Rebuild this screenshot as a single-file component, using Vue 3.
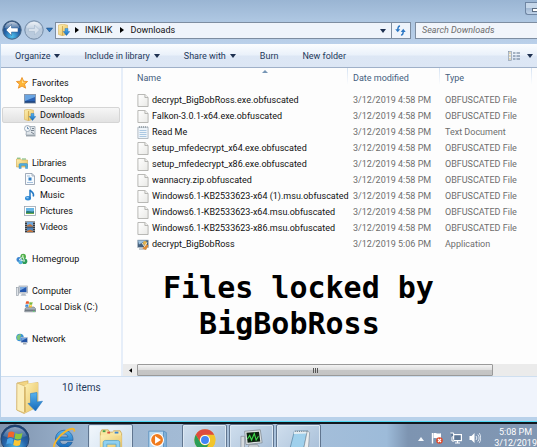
<template>
  <div class="desktop">
    <svg class="sprite" aria-hidden="true">
      <defs>
        <linearGradient id="g-folder" x1="0" y1="0" x2="1" y2="1">
          <stop offset="0" stop-color="#fdf0b4" />
          <stop offset="1" stop-color="#e6bf5c" />
        </linearGradient>
        <linearGradient id="g-blue" x1="0" y1="0" x2="0" y2="1">
          <stop offset="0" stop-color="#56b4f0" />
          <stop offset="1" stop-color="#1668b8" />
        </linearGradient>
        <linearGradient id="g-paper" x1="0" y1="0" x2="1" y2="1">
          <stop offset="0" stop-color="#ffffff" />
          <stop offset="1" stop-color="#e9e9e6" />
        </linearGradient>
        <radialGradient id="g-orb" cx="50%" cy="85%" r="85%">
          <stop offset="0" stop-color="#4fc3ef" />
          <stop offset="0.5" stop-color="#2563a8" />
          <stop offset="1" stop-color="#1c3f70" />
        </radialGradient>
        <linearGradient id="g-gloss" x1="0" y1="0" x2="0" y2="1">
          <stop offset="0" stop-color="#fff" stop-opacity="0.75" />
          <stop offset="1" stop-color="#fff" stop-opacity="0.1" />
        </linearGradient>
      </defs>

      <symbol id="i-star" viewBox="0 0 12 12">
        <path d="M6 .5 7.6 4.2 11.6 4.5 8.6 7.200 9.600 11.200 6 9.100 2.400 11.200 3.400 7.200 .4 4.500 4.400 4.200Z" fill="#ffb637" stroke="#e88a1c" stroke-width=".8" stroke-linejoin="round" />
        <path d="M6 2.200 7 5 9.500 5.300 6 6Z" fill="#ffe39a" />
      </symbol>
      <symbol id="i-desktop" viewBox="0 0 12 12">
        <rect x=".5" y="1.500" width="11" height="8.500" fill="#2a62b4" stroke="#8797ad" />
        <path d="M1 2h10v2L1 8Z" fill="#6aa5e2" />
        <path d="M1 9h10" stroke="#18345f" />
      </symbol>
      <symbol id="i-downloads" viewBox="0 0 12 12">
        <path d="M.5 1 5 .2 9.500 1.200V10L4.500 11.800.5 10.500Z" fill="url(#g-folder)" stroke="#d3a94a" stroke-width=".5" />
        <path d="M4.500 2v9.600" stroke="#c89b3d" stroke-width=".7" />
        <path d="M7 4.500h3v3h1.800L8.500 11.500 5.200 7.500H7Z" fill="url(#g-blue)" stroke="#1b6ab5" stroke-width=".4" />
      </symbol>
      <symbol id="i-recent" viewBox="0 0 12 12">
        <path d="M3 1.500h8V10H2Z" fill="#dfe5ea" stroke="#98a3ae" stroke-width=".8" />
        <path d="M2 10.800h9.500" stroke="#8b969f" stroke-width="1.200" />
        <path d="M7 7 10 9M8 3.500h2M7 5.500h3" stroke="#77828e" />
        <circle cx="3.500" cy="3.500" r="3" fill="#f6f9fc" stroke="#8c9aa9" stroke-width=".8" />
        <path d="M3.500 1.800v1.900H5" fill="none" stroke="#49759f" stroke-width=".8" />
      </symbol>
      <symbol id="i-libraries" viewBox="0 0 12 12">
        <path d="M.5 2h4l1 1h6v7H.5Z" fill="url(#g-folder)" stroke="#d3a94a" stroke-width=".6" />
        <path d="M1 1.200h3.500M6 2h4" stroke="#6fb36a" />
        <path d="M3 11.500V8c0-1 .5-1.500 1.500-1.500h6c.8 0 1.200.5 1.200 1.500v3.500H9.500V8.500H5.200v3Z" fill="#4eabe0" stroke="#2c83bb" stroke-width=".4" />
      </symbol>
      <symbol id="i-documents" viewBox="0 0 12 12">
        <path d="M1.500.5h6.500l2.500 2.500v8.500h-9Z" fill="#f7fafd" stroke="#8b98a8" stroke-width=".8" />
        <path d="M8 .5V3h2.500" fill="none" stroke="#8b98a8" stroke-width=".7" />
        <path d="M4.500 4.500h3v3h-3Z" fill="#2f7fc4" />
        <path d="M3 9.500h6M3 3h3" stroke="#8eb1d4" stroke-width=".8" />
      </symbol>
      <symbol id="i-music" viewBox="0 0 12 12">
        <ellipse cx="4" cy="9.300" rx="3" ry="2.200" fill="#2e8ad6" />
        <path d="M6 9.500V.8c.8 2.200 4.800 2.600 3.300 6.700" fill="none" stroke="#2378c4" stroke-width="1.500" />
        <ellipse cx="3.500" cy="8.800" rx="1.300" ry=".8" fill="#9ad0f5" />
      </symbol>
      <symbol id="i-pictures" viewBox="0 0 12 12">
        <rect x=".5" y="1.500" width="11" height="9" fill="#fff" stroke="#9aa5b1" stroke-width=".8" />
        <rect x="2" y="3" width="8" height="6" fill="#66b5e4" />
        <path d="M2 6.500c3-1.500 5 1 8-.5v3H2Z" fill="#287b78" />
        <path d="M2 8h8v1H2Z" fill="#6aa94b" />
      </symbol>
      <symbol id="i-videos" viewBox="0 0 12 12">
        <rect x="1" y=".5" width="10" height="11" fill="#35393f" />
        <rect x="3" y="1" width="6" height="4.500" fill="#6fa8de" />
        <rect x="3" y="6.500" width="6" height="4.500" fill="#4d83bd" />
        <path d="M3 4.500 6 3l3 2v.5H3ZM3 10l3-1.500L9 10v1H3Z" fill="#c4743a" />
        <path d="M2 1v10.500M10 1v10.500" stroke="#dfe3e6" stroke-width=".9" stroke-dasharray="1 1" />
      </symbol>
      <symbol id="i-homegroup" viewBox="0 0 12 12">
        <circle cx="7.200" cy="3.600" r="2.800" fill="#4fae4a" />
        <circle cx="3" cy="6.500" r="2.500" fill="#3f86d0" />
        <circle cx="8.500" cy="8.300" r="2.800" fill="#2f9c58" />
        <circle cx="4.500" cy="9.300" r="2" fill="#56b1df" />
        <path d="M3 6.500 7 3.800l1.500 4.500Z" fill="none" stroke="#e9f7ee" stroke-width=".9" />
        <circle cx="6.800" cy="3" r=".9" fill="#c6ecb8" />
      </symbol>
      <symbol id="i-computer" viewBox="0 0 12 12">
        <rect x=".5" y="2.500" width="2" height="8" fill="#dfe3e8" stroke="#8e98a3" stroke-width=".6" />
        <rect x="3" y="1" width="8.500" height="7" fill="#d6dbe2" stroke="#8e98a3" stroke-width=".6" />
        <rect x="4" y="2" width="6.500" height="5" fill="#2457ae" />
        <path d="M4 2h6.500L4 5.500Z" fill="#7aa9e0" />
        <path d="M6 8.500h3l1.500 2.200h-6Z" fill="#b4bcc6" />
      </symbol>
      <symbol id="i-disk" viewBox="0 0 12 12">
        <path d="M1 7.500 3 6h7l1.500 1.500v3.300H.7Z" fill="#a8b0b9" stroke="#6d7680" stroke-width=".6" />
        <path d="M1 9.200h10.300" stroke="#59626c" />
        <path d="M9 10.300h1.500" stroke="#5be06b" />
        <path d="M2 .8c1-.6 2-.6 3 0L4.600 3.200c-1-.5-2-.5-3 0Z" fill="#ea5a2a" />
        <path d="M5.600 1c1 .5 2 .5 3 0L8.200 3.400c-1 .5-2 .5-3 0Z" fill="#79b63a" />
        <path d="M1.500 3.800c1-.5 2-.5 3 0L4.100 6c-1-.5-2-.5-3 0Z" fill="#3f8dd8" />
        <path d="M5.100 4c1 .5 2 .5 3 0L7.700 6.200c-1 .5-2 .5-3 0Z" fill="#f5bd2f" />
      </symbol>
      <symbol id="i-network" viewBox="0 0 12 12">
        <circle cx="4" cy="4.500" r="3.800" fill="#3c94d4" />
        <path d="M1 3c2-2 3-2 4-1.500S3.500 4 4 5.500 2.500 7.500 1.200 6.500Z" fill="#7fc777" />
        <rect x="5" y="4.500" width="6.500" height="5" fill="#2454a5" stroke="#c0c9d4" stroke-width=".7" />
        <path d="M5.500 5h5.500l-5.500 3Z" fill="#6da2df" />
        <path d="M7 10.800h3.500" stroke="#8e98a3" stroke-width="1.200" />
      </symbol>

      <symbol id="i-file" viewBox="0 0 12 13">
        <path d="M.9.5h7l3.200 3v9H.9Z" fill="url(#g-paper)" stroke="#a8a8a5" stroke-width=".8" />
        <path d="M7.900.5v3h3.200" fill="#f1f1ee" stroke="#a8a8a5" stroke-width=".8" />
      </symbol>
      <symbol id="i-text" viewBox="0 0 12 13">
        <path d="M.9 1.200h10.200v11.300H.9Z" fill="#eef4f9" stroke="#a5aeb7" stroke-width=".8" />
        <path d="M2 1h8.500" stroke="#8c969f" stroke-width="1.400" stroke-dasharray="1 1" />
        <path d="M2.500 4.500h7M2.500 6.500h7M2.500 8.500h7M2.500 10.500h7" stroke="#a3c3df" stroke-width=".9" />
      </symbol>
      <symbol id="i-app" viewBox="0 0 12 12">
        <path d="M.5 1.500h11V9H.5Z" fill="#44607d" stroke="#b3bec9" stroke-width=".7" />
        <path d="M1 2h8L2 6Z" fill="#9ec1de" />
        <path d="M2 10.500h7" stroke="#8b969f" />
        <circle cx="8" cy="4.500" r="2" fill="#e7b44a" />
        <path d="M8.500 5.500 11.500 7 9 11.500 5.500 10Z" fill="#dd8b36" />
        <path d="M5 4.500 7.500 8 10 4" fill="none" stroke="#f5ecd2" />
      </symbol>
    </svg>

    <section class="window">
      <header class="frame">
        <div class="title-bar">
          <button class="minimize" aria-label="Minimize"><span></span></button>
        </div>
        <div class="nav-row">
          <button class="round back" aria-label="Back">
            <svg viewBox="0 0 20 20">
              <circle cx="10" cy="10" r="9.200" fill="url(#g-orb)" stroke="#45617f" />
              <path d="M2.500 8a7.600 7.600 0 0 1 15 0c-5 2-10 2-15 0Z" fill="url(#g-gloss)" />
              <path d="M9.500 4.500 4 10l5.500 5.500v-3.500H16V8H9.500Z" fill="#fff" stroke="#27568d" stroke-width=".5" />
            </svg>
          </button>
          <button class="round forward" aria-label="Forward">
            <svg viewBox="0 0 20 20">
              <circle cx="10" cy="10" r="9.200" fill="#b9cadd" stroke="#748ba6" />
              <path d="M2.500 8a7.600 7.600 0 0 1 15 0c-5 2-10 2-15 0Z" fill="url(#g-gloss)" />
              <path d="M10.500 5 15.500 10l-5 5v-3.500H4.500v-3h6Z" fill="#d7e1ec" stroke="#a5b8cc" stroke-width=".6" />
            </svg>
          </button>
          <button class="history" aria-label="Recent pages">
            <svg viewBox="0 0 8 6"><path d="M.5.8h7L4 5.200Z" fill="#2b78c0" stroke="#1f4c82" stroke-width=".7" /></svg>
          </button>
          <div class="address">
            <svg class="icon"><use href="#i-downloads" /></svg>
            <svg class="crumb-arrow" viewBox="0 0 4 6"><path d="M0 0 4 3 0 6Z" /></svg>
            <a href="#inklik">INKLIK</a>
            <svg class="crumb-arrow" viewBox="0 0 4 6"><path d="M0 0 4 3 0 6Z" /></svg>
            <a href="#downloads">Downloads</a>
            <button class="drop" aria-label="Previous locations"><span class="caret"></span></button>
            <button class="refresh" aria-label="Refresh">
              <svg viewBox="0 0 12 12">
                <path d="M5.500 1C3 1 3 3 3 6" fill="none" stroke="#2d78c4" stroke-width="1.600" />
                <path d="M.3 4.500h5.400L3 8Z" fill="#2d78c4" />
                <path d="M6.500 11C9 11 9 9 9 6.500" fill="none" stroke="#2d78c4" stroke-width="1.600" />
                <path d="M6.300 7.500h5.400L9 4Z" fill="#2d78c4" />
              </svg>
            </button>
          </div>
          <input class="search" type="text" placeholder="Search Downloads" aria-label="Search Downloads" />
        </div>
      </header>

      <div class="toolbar">
        <button v-for="c in commands" :key="c.label" class="command">
          {{ c.label }}<span v-if="c.menu" class="caret"></span>
        </button>
        <button class="command view" aria-label="Change your view">
          <svg viewBox="0 0 12 10">
            <rect x=".4" y=".4" width="3" height="9.200" fill="#e9eef4" stroke="#7f8fa3" stroke-width=".6" />
            <path d="M1.200 2h1.500M1.200 5h1.500M1.200 8h1.500" stroke="#c9a95b" />
            <path d="M5 2h2.500M8.500 2H12M5 5h2.500M8.500 5H12M5 8h2.500M8.500 8H12" stroke="#5b7189" />
          </svg>
          <span class="caret"></span>
        </button>
      </div>

      <div class="body">
        <nav class="sidebar">
          <ul v-for="group in groups" :key="group[0].label">
            <li v-for="(item, i) in group" :key="item.label">
              <a :href="'#' + item.icon" :class="{ child: i > 0, selected: item.selected }">
                <svg class="icon"><use :href="'#i-' + item.icon" /></svg>{{ item.label }}
              </a>
            </li>
          </ul>
        </nav>

        <main class="content">
          <table class="files">
            <thead>
              <tr>
                <th class="col-name">Name<span class="sort"></span></th>
                <th class="col-meta">Date modified</th>
                <th class="col-meta">Type</th>
                <th class="col-rest"></th>
              </tr>
            </thead>
            <tbody>
              <tr v-for="file in files" :key="file.name">
                <td class="name">
                  <span><svg class="icon"><use :href="'#i-' + file.icon" /></svg>{{ file.name }}</span>
                </td>
                <td>{{ file.date }}</td>
                <td>{{ file.type }}</td>
                <td></td>
              </tr>
            </tbody>
          </table>
          <p class="note">Files locked by<br />&nbsp;&nbsp;BigBobRoss</p>
          <div class="scrollbar">
            <button class="scroll-left" aria-label="Scroll left">
              <svg viewBox="0 0 4 6"><path d="M4 0 0 3 4 6Z" /></svg>
            </button>
            <div class="thumb"><i></i><i></i><i></i></div>
          </div>
        </main>
      </div>

      <footer class="details">
        <svg viewBox="0 0 28 34">
          <path d="M1 3 12 .8V4l10-1.500v24L8 33.500.8 30Z" fill="#f2d583" stroke="#cba452" stroke-width=".6" />
          <path d="M1 3 8.500 6v27L.8 30Z" fill="#fbeebb" stroke="#d0ad60" stroke-width=".6" />
          <path d="M8.500 6 12 3.500 22 2.500v24L8.500 33Z" fill="url(#g-folder)" />
          <path d="M9 7v25" stroke="#b98d3a" stroke-width=".8" />
          <path d="M14.500 13.500 21 12.500v9.500l5.500-.8L19.500 31 12 23.500l2.500-.4Z" fill="url(#g-blue)" stroke="#2a7cc4" stroke-width=".6" />
        </svg>
        <span>10 items</span>
      </footer>
    </section>

    <div class="taskbar">
      <button class="start" aria-label="Start">
        <svg viewBox="0 0 30 30">
          <circle cx="15" cy="15" r="14" fill="url(#g-orb)" stroke="#29466b" />
          <path d="M3 12a12.500 12.500 0 0 1 24 0c-8 3-16 3-24 0Z" fill="url(#g-gloss)" opacity=".7" />
          <path d="M8.500 8.500c2-1.200 4-1.200 6 0l-1 5.500c-2-1.200-4-1.200-6 0Z" fill="#f0652b" />
          <path d="M15.500 9c2 1.200 4.500 1.200 7 0l-1.200 5.500c-2.300 1.200-4.500 1.200-6.800 0Z" fill="#8cc63e" />
          <path d="M7.300 15c2-1.200 4-1.200 6 0l-1 5.500c-2-1.200-4-1.200-6 0Z" fill="#4aa5e8" />
          <path d="M14.300 15.500c2.300 1.200 4.500 1.200 6.800 0L20 21c-2.300 1.200-4.500 1.200-6.800 0Z" fill="#fcc634" />
        </svg>
      </button>
      <button class="task ie" aria-label="Internet Explorer">
        <svg viewBox="0 0 26 26">
          <path d="M13 3.500a9.500 9.500 0 1 0 9 13h-5c-1 1.600-2.300 2.300-4 2.300-2.500 0-4.300-1.700-4.500-4.300h14.300C23 8.200 19 3.500 13 3.500Zm-4.300 7.300C9.200 8.700 10.800 7.500 13 7.500s3.900 1.200 4.300 3.300Z" fill="url(#g-blue)" stroke="#155090" stroke-width=".6" />
          <path d="M2.500 23.500C.5 20 6 10 15.500 4.200 21 .9 25 1 24 5" fill="none" stroke="#f4b62c" stroke-width="2" />
        </svg>
      </button>
      <button class="task open active" aria-label="Windows Explorer">
        <svg viewBox="0 0 26 26">
          <path d="M1.500 5 3 2h7l1.500 2.500h3L16 3h7l1.500 3v19h-23Z" fill="#f9e6a0" stroke="#c9a046" stroke-width=".8" />
          <path d="M4 3.500h3" stroke="#46a04b" stroke-width="2" />
          <path d="M9 5h3" stroke="#d9513c" stroke-width="2" />
          <path d="M17 5h4" stroke="#3f86d0" stroke-width="2" />
          <path d="M1.500 8h23v18h-23Z" fill="url(#g-folder)" />
          <path d="M4.500 26V16c0-1.500.8-2.500 2.500-2.500h13c1.700 0 2.500 1 2.500 2.500v10h-4v-8.500H8.500V26Z" fill="#8fd0f0" stroke="#4f9fca" stroke-width=".8" />
        </svg>
      </button>
      <button class="task wmp" aria-label="Media Player">
        <svg viewBox="0 0 26 26">
          <path d="M3 4.500h16v21H3Z" fill="#b9d9f1" stroke="#5e93c0" />
          <path d="M19 4.500l3 1.500v20h-3Z" fill="#83b4dc" stroke="#5e93c0" />
          <circle cx="12" cy="14" r="7" fill="#f07b1e" stroke="#fff" stroke-width="1.200" />
          <path d="M9.800 9.800v8.400l6.400-4.200Z" fill="#fff" />
        </svg>
      </button>
      <button class="task open" aria-label="Chrome">
        <svg viewBox="0 0 26 26">
          <circle cx="13" cy="13" r="11.500" fill="#f2c52b" />
          <path d="M3 7.300A11.500 11.500 0 0 1 23 7.300H13A5.700 5.700 0 0 0 7.800 15.500Z" fill="#dd4b3e" />
          <path d="M3 7.300A11.500 11.500 0 0 0 13 24.500L18 15.800A5.700 5.700 0 0 1 8 15.800Z" fill="#2a9d58" />
          <circle cx="13" cy="13" r="5.500" fill="#fff" />
          <circle cx="13" cy="13" r="4.300" fill="#4285f4" />
        </svg>
      </button>
      <button class="task open" aria-label="Task Manager">
        <svg viewBox="0 0 26 26">
          <path d="M1 9h4v13H1Z" fill="#d5dade" stroke="#7c858d" stroke-width=".7" />
          <path d="M5 3.500 22 2l2 14-17.500 2Z" fill="#dfe3e5" stroke="#7c858d" stroke-width=".8" />
          <path d="M7 5.200 20.500 4l1.500 10.500L8.300 16Z" fill="#0d2410" />
          <path d="M8 12l2.500-4 2 5 3-7 2 7 2.500-4" fill="none" stroke="#3fdc4a" stroke-width="1.200" />
          <path d="M10 18h9l3 4.500H8Z" fill="#c9ced2" stroke="#7c858d" stroke-width=".7" />
        </svg>
      </button>
      <button class="task open" aria-label="Notepad">
        <svg viewBox="0 0 26 26">
          <path d="M8 3.500 22 3l-4.500 22H2.500Z" fill="#9fd0ec" stroke="#5c87a5" stroke-width=".8" />
          <path d="M8 3.500 22 3l-.7 3-14 .5Z" fill="#e5edf2" />
          <path d="M22 3l2.500 2L23 25h-5.500Z" fill="#ebeef0" stroke="#7e8c97" stroke-width=".7" />
          <path d="M9 3.700h13" stroke="#6d7d8a" stroke-width="1.500" stroke-dasharray="1 1" />
        </svg>
      </button>

      <div class="tray">
        <button aria-label="Show hidden icons"><svg class="up" viewBox="0 0 6 4"><path d="M0 4 3 0 6 4Z" fill="#f4f8fc" /></svg></button>
        <button aria-label="Action Center">
          <svg viewBox="0 0 12 12">
            <path d="M1.500 1v10.500" stroke="#fff" stroke-width="1.400" />
            <path d="M2.500 1.200c2-.8 3.500 1 7.500 0v5c-4 1-5.500-.8-7.500 0Z" fill="#fff" />
            <circle cx="8.500" cy="8.500" r="3.300" fill="#dd4a2c" />
            <path d="M7 7l3 3M10 7l-3 3" stroke="#fff" stroke-width="1.100" />
          </svg>
        </button>
        <button aria-label="Network">
          <svg viewBox="0 0 12 12">
            <rect x="3.600" y="2.600" width="7.800" height="6" fill="#5f7896" stroke="#fff" stroke-width="1.200" />
            <path d="M5 11h5M7.500 9v2" stroke="#fff" stroke-width="1.200" />
            <path d="M.4 1h3.200v2.500c0 1-1.600 1-1.600 2V9h2" fill="#5f7896" stroke="#fff" />
          </svg>
        </button>
        <button aria-label="Volume">
          <svg viewBox="0 0 12 12">
            <path d="M.5 4H2.500L5.500 1v10l-3-3H.5Z" fill="#fff" />
            <path d="M7 4c1 1.200 1 2.800 0 4M8.800 2.500c1.800 2 1.800 5 0 7M10.300 1.200c2 2.800 2 6.800 0 9.600" fill="none" stroke="#eef4fa" stroke-width=".9" />
          </svg>
        </button>
        <div class="clock">
          <time>5:08 PM</time>
          <time>3/12/2019</time>
        </div>
      </div>
    </div>
  </div>
</template>

<script setup>
const commands = [
  { label: 'Organize', menu: true },
  { label: 'Include in library', menu: true },
  { label: 'Share with', menu: true },
  { label: 'Burn' },
  { label: 'New folder' }
];

// first entry of each group is its heading
const groups = [
  [
    { label: 'Favorites', icon: 'star' },
    { label: 'Desktop', icon: 'desktop' },
    { label: 'Downloads', icon: 'downloads', selected: true },
    { label: 'Recent Places', icon: 'recent' }
  ],
  [
    { label: 'Libraries', icon: 'libraries' },
    { label: 'Documents', icon: 'documents' },
    { label: 'Music', icon: 'music' },
    { label: 'Pictures', icon: 'pictures' },
    { label: 'Videos', icon: 'videos' }
  ],
  [{ label: 'Homegroup', icon: 'homegroup' }],
  [
    { label: 'Computer', icon: 'computer' },
    { label: 'Local Disk (C:)', icon: 'disk' }
  ],
  [{ label: 'Network', icon: 'network' }]
];

const locked = (name) => ({ name, date: '3/12/2019 4:58 PM', type: 'OBFUSCATED File', icon: 'file' });

const files = [
  locked('decrypt_BigBobRoss.exe.obfuscated'),
  locked('Falkon-3.0.1-x64.exe.obfuscated'),
  { name: 'Read Me', date: '3/12/2019 4:58 PM', type: 'Text Document', icon: 'text' },
  locked('setup_mfedecrypt_x64.exe.obfuscated'),
  locked('setup_mfedecrypt_x86.exe.obfuscated'),
  locked('wannacry.zip.obfuscated'),
  locked('Windows6.1-KB2533623-x64 (1).msu.obfuscated'),
  locked('Windows6.1-KB2533623-x64.msu.obfuscated'),
  locked('Windows6.1-KB2533623-x86.msu.obfuscated'),
  { name: 'decrypt_BigBobRoss', date: '3/12/2019 5:06 PM', type: 'Application', icon: 'app' }
];
</script>

<style>
body {
  margin: 0;
  overflow: hidden;
}
</style>

<style scoped>
.desktop {
  display: flex;
  flex-direction: column;
  height: 100vh;
  overflow: hidden;
  font: 9px/16px Roboto, "Open Sans", sans-serif;
  color: #111;
  white-space: nowrap;
}

.sprite {
  position: absolute;
  width: 0;
  height: 0;
}

button {
  margin: 0;
  padding: 0;
  border: 0;
  background: none;
  font: inherit;
  color: inherit;
}

a {
  color: inherit;
  text-decoration: none;
}

svg {
  display: block;
  flex: none;
}

.icon {
  width: 12px;
  height: 12px;
}

.caret {
  display: inline-block;
  border: 3px solid transparent;
  border-top: 4px solid #1e3050;
  border-bottom: 0;
}

.window {
  flex: 1;
  min-height: 0;
  display: flex;
  flex-direction: column;
  background: #b9d1ea;
  border-bottom: 1px solid #4fd8f4;
}

.frame {
  background: linear-gradient(#9ab5d3, #adc6e1 45%, #bad0ea);
}

.title-bar {
  display: flex;
  justify-content: flex-end;
  height: 18px;
  box-sizing: border-box;
  padding-top: 2px;
}

.minimize {
  width: 12px;
  height: 13px;
  border: 1px solid #6f86a3;
  border-right: 0;
  border-radius: 0 0 0 3px;
  background: linear-gradient(#c7d8ea 45%, #a3bad4 50%, #bfd2e8);
}

.minimize span {
  display: block;
  width: 6px;
  height: 2px;
  margin: 3px 0 0 6px;
  border: 1px solid #5c6d82;
  background: #fff;
}

.nav-row {
  display: flex;
  align-items: center;
  height: 26px;
  padding: 0 0 2px 2px;
  box-sizing: border-box;
}

.round svg {
  width: 20px;
  height: 20px;
}

.forward {
  margin-left: 2px;
}

.history {
  margin: 0 2px;
}

.history svg {
  width: 7px;
  height: 6px;
}

.address {
  flex: 355 1 0;
  display: flex;
  align-items: center;
  height: 17px;
  box-sizing: border-box;
  padding-left: 2px;
  border: 1px solid #7d8da1;
  background: #eff4fb;
}

.address a {
  margin-right: 8px;
}

.crumb-arrow {
  width: 4px;
  height: 6px;
  margin: 0 6px 0 5px;
}

.address a + .crumb-arrow {
  margin-left: 0;
}

.drop {
  margin-left: auto;
  width: 15px;
  line-height: 6px;
}

.refresh {
  display: flex;
  align-items: center;
  justify-content: center;
  width: 19px;
  height: 15px;
  border-left: 1px solid #7d8da1;
}

.refresh svg {
  width: 11px;
  height: 11px;
}

.search {
  flex: 116 1 0;
  min-width: 0;
  height: 17px;
  box-sizing: border-box;
  margin-left: 4px;
  padding: 0 0 0 6px;
  border: 1px solid #7d8da1;
  border-right: 0;
  background: #f1f5fb;
  font: italic 9px/15px Roboto, "Open Sans", sans-serif;
}

.search::placeholder {
  color: #6d6d6d;
  opacity: 1;
}

.toolbar {
  display: flex;
  align-items: center;
  gap: 24px;
  height: 24px;
  box-sizing: border-box;
  margin-left: 1px;
  padding: 0 4px 0 14px;
  border-bottom: 1px solid #9fb0c8;
  background: linear-gradient(#fbfdff, #eaf1fa 48%, #dde7f5 52%, #dce6f4);
  color: #1e395b;
}

.command {
  display: flex;
  align-items: center;
  gap: 4px;
}

.view {
  margin-left: auto;
  gap: 7px;
}

.view svg {
  width: 12px;
  height: 10px;
}

.body {
  flex: 1;
  min-height: 0;
  display: flex;
  margin-left: 1px;
  background: #fdfdfd;
}

.sidebar {
  flex: none;
  width: 120px;
  padding-top: 7px;
  border-right: 2px solid #e6eef9;
}

.sidebar ul {
  margin: 0 0 16px;
  padding: 0;
  list-style: none;
}

.sidebar a {
  display: flex;
  align-items: center;
  gap: 4px;
  height: 16px;
  box-sizing: border-box;
  margin: 0 1px;
  padding-left: 14px;
}

.sidebar .child {
  padding-left: 22px;
}

.sidebar .selected {
  padding-left: 21px;
  border: 1px solid #d5d5d5;
  border-radius: 2px;
  background: linear-gradient(#f6f6f6, #e2e2e2);
}

.content {
  flex: 1;
  min-width: 0;
  display: flex;
  flex-direction: column;
}

.files {
  width: 100%;
  table-layout: fixed;
  border-collapse: collapse;
}

.files th {
  position: relative;
  height: 20px;
  padding: 0 0 4px 6px;
  border: 0;
  background: linear-gradient(#d5e3f3, #fdfdfd) left top / 1px 17px no-repeat;
  font-weight: normal;
  text-align: left;
  color: #44607e;
}

.files .col-name {
  padding-left: 14px;
  background: none;
}

.col-meta {
  width: 86px;
}

.files .col-rest {
  width: 6px;
  padding-left: 0;
}

.sort {
  position: absolute;
  top: 2px;
  left: 62%;
  border: 3px solid transparent;
  border-bottom: 3px solid #7695b5;
  border-top: 0;
}

.files td {
  height: 16px;
  padding: 0 0 0 6px;
  color: #6d6d6d;
}

.files td.name {
  padding-left: 14px;
  color: #111;
}

.name span {
  display: flex;
  align-items: center;
  gap: 3px;
}

.name .icon {
  height: 13px;
}

.note {
  margin: 18px 0 0 40px;
  font: bold 30px/36px "DejaVu Sans Mono", monospace;
  color: #000;
}

.scrollbar {
  display: flex;
  height: 12px;
  margin-top: auto;
  background: #ebebeb;
}

.scroll-left {
  display: flex;
  align-items: center;
  justify-content: center;
  width: 14px;
}

.scroll-left svg {
  width: 3px;
  height: 5px;
}

.thumb {
  display: flex;
  align-items: center;
  justify-content: center;
  gap: 1px;
  width: 86%;
  box-sizing: border-box;
  border: 1px solid #9a9a9a;
  border-radius: 1px;
  background: linear-gradient(#f3f3f3, #e0e0e0 45%, #c6c6c6 55%, #c4c4c4);
}

.thumb i {
  width: 1px;
  height: 5px;
  background: #555;
}

.details {
  display: flex;
  align-items: flex-start;
  gap: 18px;
  height: 41px;
  box-sizing: border-box;
  margin: 0 0 4px 1px;
  padding: 3px 0 0 15px;
  border-top: 1px solid #cfdff0;
  background: #f0f4fc;
  font-size: 10px;
  color: #1e395b;
}

.details svg {
  width: 28px;
  height: 34px;
}

.taskbar {
  flex: none;
  display: flex;
  align-items: flex-start;
  height: 25px;
  box-sizing: border-box;
  border-top: 2px solid #10151c;
  overflow: hidden;
  background: linear-gradient(90deg, #7f93ae, #9db5cf 16%, #a8c0da 50%, #9dbbd9 72%, #7d94b1 76%, #8197b3);
}

.start {
  margin-right: 11px;
}

.start svg {
  width: 30px;
  height: 30px;
}

.task {
  display: flex;
  justify-content: center;
  flex: none;
  width: 45px;
  height: 34px;
  margin-right: 2px;
  box-sizing: border-box;
  padding-top: 3px;
}

.task svg {
  width: 24px;
  height: 24px;
}

.open {
  border: 1px solid #60758f;
  border-radius: 2px;
  background: linear-gradient(135deg, #cfdeed, #a5bdd7);
  box-shadow: inset 0 0 0 1px #dce8f3;
}

.open.active {
  background: linear-gradient(135deg, #f2f7fc, #c9dbed);
}

.tray {
  display: flex;
  align-items: flex-start;
  gap: 7px;
  margin-left: auto;
  padding-top: 3px;
  color: #fff;
}

.tray svg {
  width: 12px;
  height: 12px;
  margin-top: 5px;
}

.tray .up {
  width: 6px;
  height: 4px;
  margin-top: 10px;
}

.clock {
  display: flex;
  flex-direction: column;
  align-items: center;
  margin-left: 6px;
  line-height: 11px;
}
</style>
